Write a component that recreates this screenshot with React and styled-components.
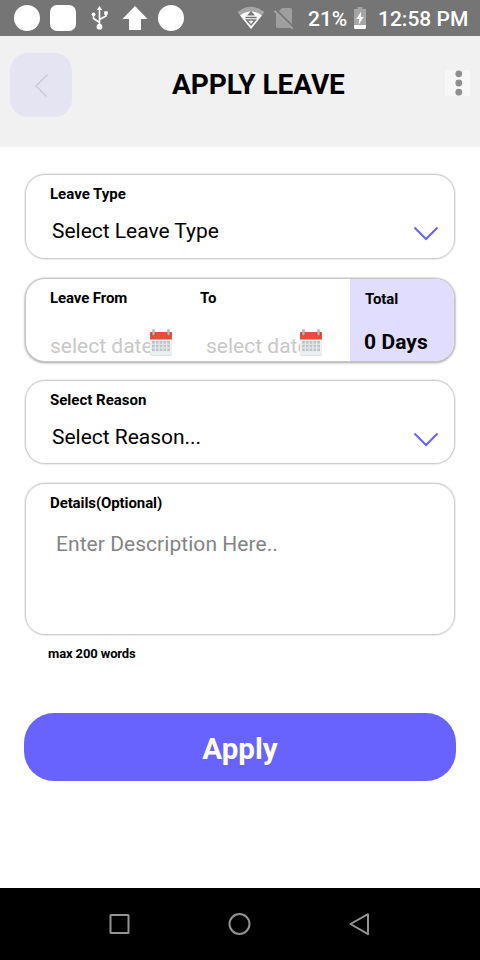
import React from "react";
import styled, { createGlobalStyle } from "styled-components";

const Global = createGlobalStyle`
  * { box-sizing: border-box; }
  body { margin: 0; background: #fff; font-family: Roboto, sans-serif; color: #000; }
  svg { display: block; flex: none; }
`;

const Screen = styled.div`
  width: 480px;
  height: 960px;
  display: flex;
  flex-direction: column;
  overflow: hidden;
`;

const StatusBar = styled.header`
  height: 36px;
  flex: none;
  background: #757575;
  color: #fff;
  display: flex;
  align-items: center;
  padding: 0 12px 0 14px;
`;

const StatusText = styled.span`
  font-size: 21px;
  font-weight: 500;
  line-height: 24px;
  white-space: nowrap;
  width: ${(p) => p.$width}px;
  padding-top: 1px;
  margin-left: ${(p) => p.$gap}px;
`;

const TitleBar = styled.div`
  height: 111px;
  flex: none;
  background: #f1f1f1;
  display: flex;
  align-items: flex-start;
`;

const BackButton = styled.button`
  width: 62px;
  height: 64px;
  margin: 17px 0 0 10px;
  padding: 0;
  border: 0;
  border-radius: 18px;
  background: #e5e4f2;
`;

const Title = styled.h1`
  margin: 31px 0 0 100px;
  width: 173px;
  font-size: 28px;
  line-height: 36px;
  font-weight: 700;
  white-space: nowrap;
  letter-spacing: -0.05px;
`;

const MoreButton = styled.button`
  width: 25px;
  height: 26px;
  margin: 34px 0 0 100px;
  padding: 0;
  border: 0;
  background: #f7f7f7;
`;

const Form = styled.main`
  flex: 1;
  display: flex;
  flex-direction: column;
  padding: 26px 24px 0;
`;

const Card = styled.section`
  height: ${(p) => p.$height - 2}px;
  flex: none;
  margin: 1px 1px ${(p) => p.$gap + 1}px;
  border: 1px solid ${(p) => (p.$raised ? "#c6c6c6" : "#cecece")};
  border-radius: 20px;
  background: #fff;
  overflow: hidden;
  box-shadow: ${(p) =>
    p.$raised
      ? "0 0 0 1px rgba(0,0,0,.07), 0 1px 3px rgba(0,0,0,.3)"
      : "0 0 0 1px rgba(0,0,0,.05), 0 0 2px rgba(0,0,0,.08)"};
`;

const CardBody = styled.div`
  padding: ${(p) => p.$top}px 16px 0 24px;
`;

const Label = styled.div`
  font-size: 15px;
  line-height: 20px;
  font-weight: 700;
  white-space: nowrap;
  letter-spacing: ${(p) => p.$spacing || 0}px;
`;

const SelectRow = styled.div`
  display: flex;
  justify-content: space-between;
  align-items: center;
  margin-top: 13px;
  padding-left: 2px;
  font-size: 21px;
  line-height: 28px;
  letter-spacing: -0.02px;
`;

const DateCard = styled.div`
  height: 100%;
  display: grid;
  grid-template-columns: 174px 150px 1fr;
`;

const DateField = styled.div`
  padding: ${(p) => (p.$first ? "9px 0 0 24px" : "9px 0 0 0")};
`;

const DateRow = styled.div`
  display: flex;
  align-items: flex-start;
  margin: 21px 0 0 ${(p) => p.$indent}px;
`;

const DateText = styled.span`
  width: ${(p) => p.$width}px;
  white-space: nowrap;
  font-size: 21px;
  line-height: 28px;
  margin-top: 3px;
  color: #c8c8c8;
`;

const CalendarSlot = styled.span`
  position: relative;
  z-index: 1;
`;

const Total = styled.div`
  background: #e0ddff;
  padding: 10px 0 0 15px;
`;

const TotalValue = styled.div`
  margin: 19px 0 0 -1px;
  font-size: 21px;
  line-height: 28px;
  font-weight: 700;
  white-space: nowrap;
  letter-spacing: 0.08px;
`;

const Placeholder = styled.div`
  margin: 17px 0 0 6px;
  font-size: 21px;
  line-height: 28px;
  color: #848484;
  letter-spacing: 0.05px;
`;

const Hint = styled.div`
  margin: 10px 0 51px 24px;
  font-size: 13px;
  line-height: 16px;
  font-weight: 700;
  letter-spacing: -0.12px;
`;

const ApplyButton = styled.button`
  height: 68px;
  flex: none;
  padding: 4px 0 0;
  border: 0;
  border-radius: 30px;
  background: #6862ff;
  color: #fff;
  font: 700 29.6px/36px Roboto, sans-serif;
`;

const NavBar = styled.nav`
  height: 72px;
  flex: none;
  background: #000;
  display: flex;
  justify-content: center;
  align-items: center;
  gap: 84px;
`;

const StatusIcons = () => (
  <svg width="280" height="36" viewBox="14 0 280 36" fill="#fff">
    <circle cx="27" cy="18" r="13" />
    <rect x="50" y="5" width="26" height="26" rx="7" />
    <g stroke="#fff" strokeWidth="1.6" fill="none">
      <path d="M99.5 8v18M99.5 22.5l-6-4v-4M99.5 19.5l6.500-3.500v-3" />
    </g>
    <path d="M99.5 6l2.700 4h-5.400z" />
    <circle cx="99.5" cy="26.700" r="2.900" />
    <circle cx="93.6" cy="14.300" r="1.900" />
    <rect x="104.2" y="11.300" width="3.500" height="3.500" />
    <path d="M135 6l12.500 13H141v11h-12V19h-6.500z" />
    <circle cx="171" cy="18" r="13" />
    <path d="M237.500 12q13.500-10.500 27 0L251 29z" fill="#a5a5a5" />
    <path d="M240 15.500q5-4 11-4t11 4L251 29z" />
    <path d="M251 11l-4 4.500h8z" fill="#757575" />
    <path d="M245.500 17.500h11M246.500 20h9l-4.500 5z" fill="none" stroke="#757575" strokeWidth="1.300" />
    <path d="M282 8h8.500q1.500 0 1.500 1.500v17q0 1.500-1.500 1.500h-13q-1.500 0-1.500-1.500V14z" fill="#9e9e9e" />
    <path d="M275.500 9.500l18 18" stroke="#757575" strokeWidth="2.400" />
    <path d="M274.300 10.800l18.500 18" stroke="#a2a2a2" strokeWidth="1.900" />
  </svg>
);

const BatteryIcon = () => (
  <svg width="12" height="22" viewBox="0 0 12 22">
    <path d="M3.500 0h5v2H12v16H0V2h3.500z" fill="#a5a5a5" />
    <path d="M0 18h12v2.500Q12 22 10.500 22h-9Q0 22 0 20.500zM7.200 4.500L2.300 12h3L4.700 17.500 9.700 10h-3z" fill="#fff" />
  </svg>
);

const Chevron = () => (
  <svg width="24" height="28" viewBox="0 0 24 28" fill="none" stroke="#6862ff" strokeWidth="2">
    <path d="M.5 10.500L12 22 23.500 10.500" />
  </svg>
);

const CalendarIcon = () => (
  <CalendarSlot>
    <svg width="22" height="27" viewBox="0 0 22 27">
      <path d="M0 10h22v14.500q0 1.500-1.500 1.500h-19Q0 26 0 24.500z" fill="#ecf0f1" />
      <path d="M0 24q0 2 1.500 2h19q1.500 0 1.500-2v1q0 1.500-1.500 1.500h-19Q0 26.500 0 25z" fill="#bdc3c7" />
      <path d="M1 3h20q1 0 1 1v6.500H0V4q0-1 1-1z" fill="#e74c3c" />
      {[3.5, 18.5].map((x) => (
        <g key={x}>
          <circle cx={x} cy="4.800" r="2.200" fill="#c0392b" />
          <path d={`M${x} 1.300v4`} stroke="#b5babd" strokeWidth="2.400" strokeLinecap="round" />
        </g>
      ))}
      {[12, 15.7, 19.4].map((y) =>
        [2, 5.8, 9.6, 13.4, 17.2].map((x) => (
          <rect key={`${x}-${y}`} x={x} y={y} width="2.800" height="2.700" fill="#bdc3c7" />
        ))
      )}
    </svg>
  </CalendarSlot>
);

function SelectCard({ label, value, height, gap, top }) {
  return (
    <Card $height={height} $gap={gap}>
      <CardBody $top={top}>
        <Label>{label}</Label>
        <SelectRow>
          <span>{value}</span>
          <Chevron />
        </SelectRow>
      </CardBody>
    </Card>
  );
}

export default function App() {
  return (
    <Screen>
      <Global />
      <StatusBar>
        <StatusIcons />
        <StatusText $gap={14} $width={39}>21%</StatusText>
        <svg width="7" height="1" />
        <BatteryIcon />
        <StatusText $gap={12} $width={90}>12:58 PM</StatusText>
      </StatusBar>
      <TitleBar>
        <BackButton aria-label="Back">
          <svg width="62" height="64" viewBox="0 0 62 64" fill="none" stroke="#cccbd8" strokeWidth="1.600">
            <path d="M37.500 21.500L26 33l10.500 10.500" />
          </svg>
        </BackButton>
        <Title>APPLY LEAVE</Title>
        <MoreButton aria-label="More">
          <svg width="25" height="26" viewBox="0 0 25 26" fill="#8f8f8f">
            <circle cx="13.800" cy="3.800" r="3.400" />
            <circle cx="13.800" cy="13" r="3.400" />
            <circle cx="13.800" cy="22.200" r="3.400" />
          </svg>
        </MoreButton>
      </TitleBar>
      <Form>
        <SelectCard label="Leave Type" value="Select Leave Type" height={87} gap={17} top={9} />
        <Card $height={86} $gap={16} $raised>
          <DateCard>
            <DateField $first>
              <Label $spacing={-0.1}>Leave From</Label>
              <DateRow $indent={0}>
                <DateText $width={100}>select date</DateText>
                <CalendarIcon />
              </DateRow>
            </DateField>
            <DateField>
              <Label>To</Label>
              <DateRow $indent={6}>
                <DateText $width={94}>select date</DateText>
                <CalendarIcon />
              </DateRow>
            </DateField>
            <Total>
              <Label $spacing={-0.1}>Total</Label>
              <TotalValue>0 Days</TotalValue>
            </Total>
          </DateCard>
        </Card>
        <SelectCard label="Select Reason" value="Select Reason..." height={86} gap={17} top={9} />
        <Card $height={154} $gap={0}>
          <CardBody $top={9}>
            <Label $spacing={-0.1}>Details(Optional)</Label>
            <Placeholder>Enter Description Here..</Placeholder>
          </CardBody>
        </Card>
        <Hint>max 200 words</Hint>
        <ApplyButton>Apply</ApplyButton>
      </Form>
      <NavBar>
        <svg width="36" height="36" viewBox="0 0 36 36" fill="none" stroke="#939393" strokeWidth="2">
          <rect x="8.500" y="9" width="18" height="18" rx=".5" />
        </svg>
        <svg width="36" height="36" viewBox="0 0 36 36" fill="none" stroke="#939393" strokeWidth="2">
          <circle cx="17.500" cy="18" r="10" />
        </svg>
        <svg width="36" height="36" viewBox="0 0 36 36" fill="none" stroke="#939393" strokeWidth="2" strokeLinejoin="round">
          <path d="M26 8.200v20L8.500 18z" />
        </svg>
      </NavBar>
    </Screen>
  );
}
